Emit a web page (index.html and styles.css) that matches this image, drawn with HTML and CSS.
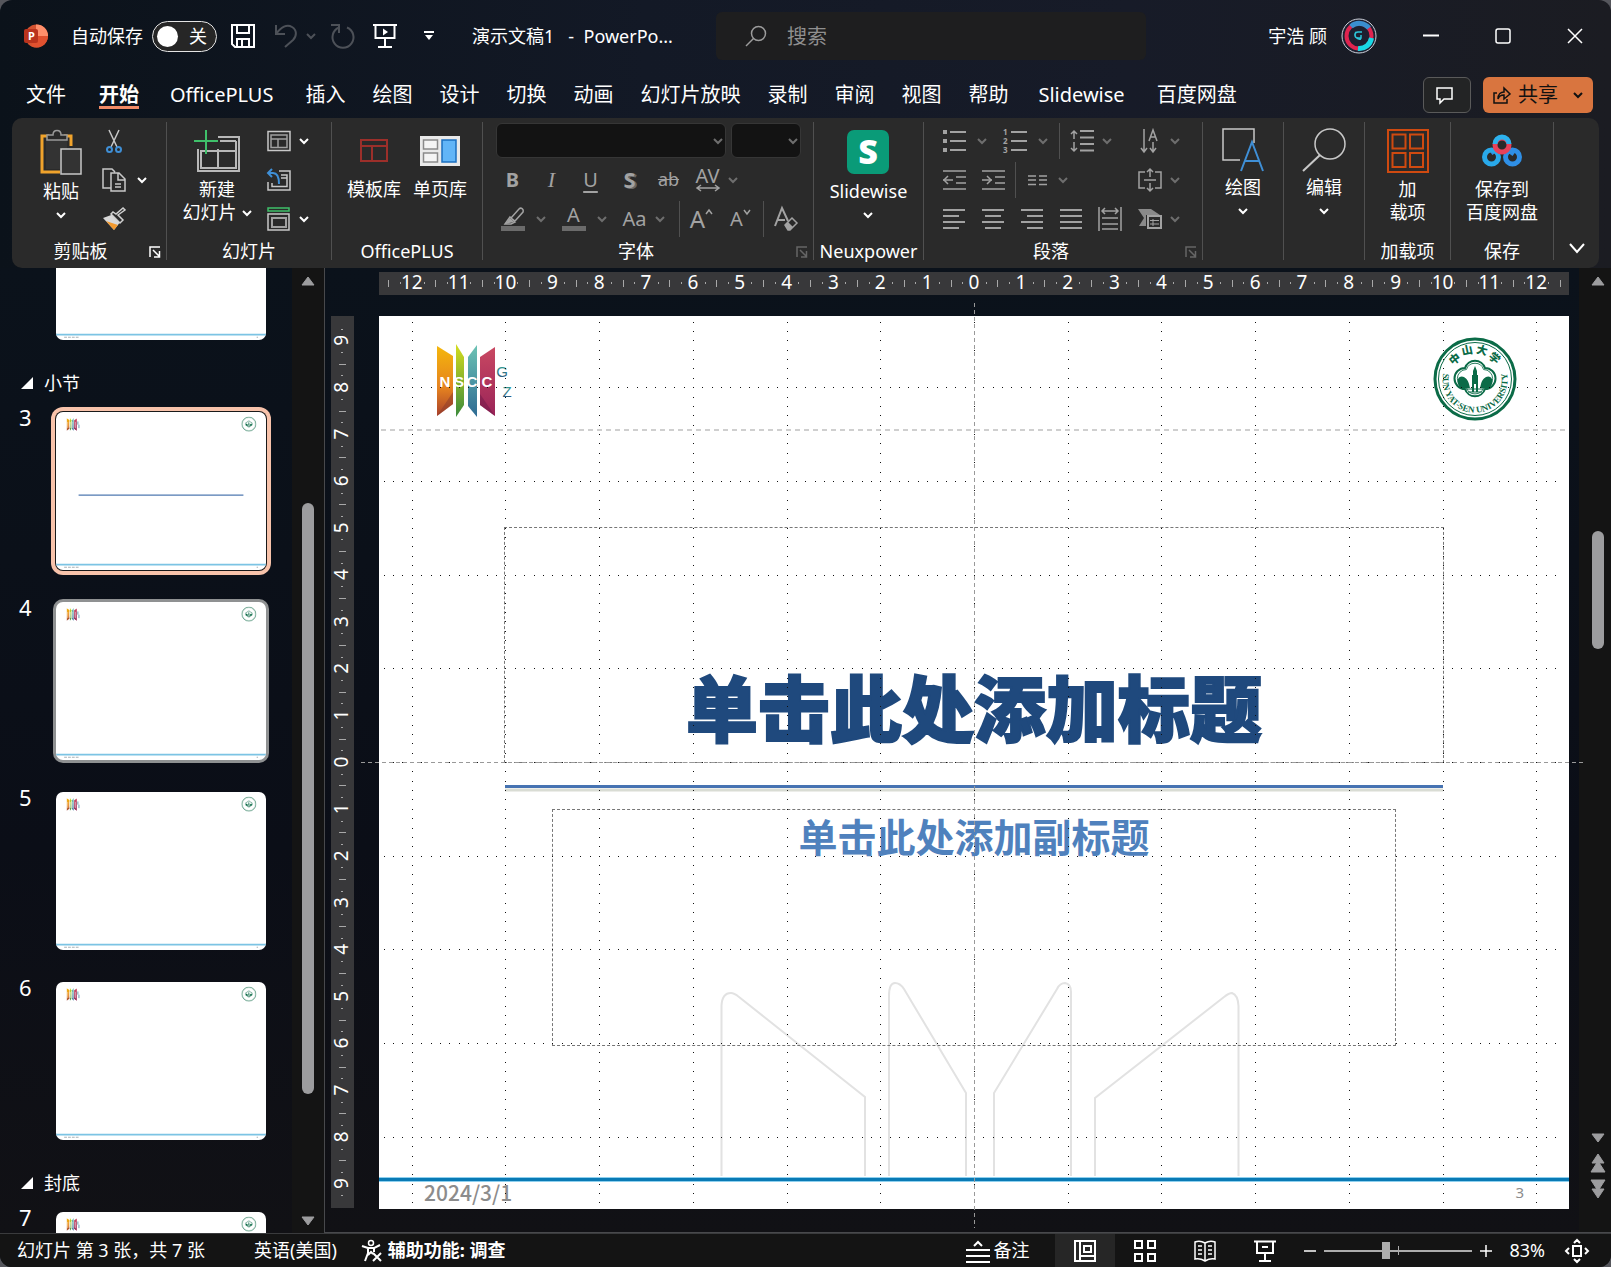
FILE: index.html
```html
<!DOCTYPE html>
<html lang="zh-CN">
<head>
<meta charset="utf-8">
<meta name="viewport" content="width=device-width, initial-scale=1">
<title>演示文稿1 - PowerPoint</title>
<link rel="stylesheet" href="styles.css">
</head>
<body>
<svg class="sprite" width="0" height="0" aria-hidden="true">
  <defs>
    <linearGradient id="gN" x1="0" y1="0" x2="0" y2="1"><stop offset="0" stop-color="#f5b70c"/><stop offset=".6" stop-color="#e5821f"/><stop offset="1" stop-color="#a8402c"/></linearGradient>
    <linearGradient id="gS" x1="0" y1="0" x2="0" y2="1"><stop offset="0" stop-color="#d6dd1e"/><stop offset="1" stop-color="#3a8a3c"/></linearGradient>
    <linearGradient id="gC" x1="0" y1="0" x2="0" y2="1"><stop offset="0" stop-color="#6cc3b4"/><stop offset="1" stop-color="#2d6a93"/></linearGradient>
    <linearGradient id="gD" x1="0" y1="0" x2="0" y2="1"><stop offset="0" stop-color="#c94862"/><stop offset="1" stop-color="#9a2458"/></linearGradient>
    <linearGradient id="gZ" x1="0" y1="0" x2="0" y2="1"><stop offset="0" stop-color="#35b09b"/><stop offset="1" stop-color="#2c4a78"/></linearGradient>
  </defs>
  <symbol id="chev" viewBox="0 0 10 10"><path d="M1 3l4 4 4-4" fill="none" stroke="currentColor" stroke-width="2"/></symbol>
  <symbol id="launch" viewBox="0 0 12 12"><path d="M1 11V1h10M4 4l6 6M10.500 5v6H5" fill="none" stroke="currentColor" stroke-width="1.500"/></symbol>
  <symbol id="bars" viewBox="0 0 71 74">
    <path d="M0 2L16 12V60L0 72z" fill="url(#gN)"/><path d="M19 0L27 13V61L19 73z" fill="url(#gS)"/>
    <path d="M40 1L31 13V62L40 73z" fill="url(#gC)"/><path d="M58 3L43 13V61L58 72z" fill="url(#gD)"/>
    <path d="M0 72l16-24v12z" fill="#8a3a2a" opacity=".5"/><path d="M58 72L43 50v11z" fill="#6d1747" opacity=".5"/>
  </symbol>
  <symbol id="ring" viewBox="-43 -43 86 86">
    <g fill="none" stroke="#0b6b47"><circle r="40" stroke-width="3"/><circle r="36.500" stroke-width="1"/>
    <path d="M-10-11A10.500 10.500 0 0 1 10-11A10.500 10.500 0 0 1 10 10A10.500 10.500 0 0 1-10 10A10.500 10.500 0 0 1-10-11z" stroke-width="2"/>
    <path d="M-10-11A10.500 10.500 0 0 1 10-11A10.500 10.500 0 0 1 10 10A10.500 10.500 0 0 1-10 10A10.500 10.500 0 0 1-10-11z" stroke-width="1" transform="scale(.86)"/></g>
    <path d="M-17 0c3-5 9-2 11 5l1 4h-9c-3-2-4-6-3-9zM17 0C14-5 8-2 6 5L5 9h9c3-2 4-6 3-9z" fill="#0b6b47"/>
    <path d="M-3 13V-4h1v-4L0-13l2 5v4h1v17h-2V5h-2v8z" fill="#0b6b47"/><path d="M-9 10H9M-7 13H7" stroke="#0b6b47"/>
  </symbol>
  <symbol id="mini" viewBox="0 0 1190 892">
    <use href="#bars" x="60" y="32" width="71" height="74"/>
    <path d="M64 54v36M75 54v36M82 54v36M95 54v36M110 54v36" stroke="#fff" stroke-width="4" opacity=".7"/>
    <path d="M124 52v18M130 70v20" stroke="#5a8fa8" stroke-width="5"/>
    <use href="#ring" x="1050" y="24" width="86" height="86"/>
    <path d="M0 863H1190" stroke="#7cc4e4" stroke-width="10"/><path d="M46 878h88M1137 878h8" stroke="#a9b3b8" stroke-width="6" stroke-dasharray="16 6"/>
  </symbol>
</svg>

<div class="app">
  <header class="titlebar">
    <div class="quick">
      <svg class="logo" viewBox="0 0 24 24" aria-hidden="true"><circle cx="12.500" cy="12" r="11.500" fill="#d35230"/><path d="M12 .5A11.500 11.500 0 0 1 24 12H12z" fill="#ff8f6b"/><path d="M12 12h12a11.500 11.500 0 0 1-17 10z" fill="#e0512f"/><rect y="5" width="14" height="14" rx="2" fill="#b9331d"/><text x="4" y="16" class="logo-p">P</text></svg>
      <span class="autosave" id="as">自动保存</span>
      <label class="toggle"><input type="checkbox" aria-labelledby="as"><span>关</span></label>
      <button class="qa save" aria-label="保存"><svg viewBox="0 0 24 24"><path d="M1 1h22v22H4l-3-3zM6 1v8h12V1M6 23v-8h12v8M11 16v6" fill="none" stroke="currentColor" stroke-width="2"/></svg></button>
      <button class="qa undo dim" aria-label="撤消"><svg viewBox="0 0 24 24"><path d="M2 1v9h9M2 10C7 3 13 0 18 3s5 9 1 13l-8 7" fill="none" stroke="currentColor" stroke-width="2"/></svg></button>
      <button class="tiny dim" aria-label="撤消列表"><svg viewBox="0 0 10 10"><use href="#chev"/></svg></button>
      <button class="qa redo dim" aria-label="恢复"><svg viewBox="0 0 24 24"><path d="M1 1h8v8M9 3.500A10.500 10.500 0 1 0 17 3.500" fill="none" stroke="currentColor" stroke-width="2"/></svg></button>
      <button class="qa present" aria-label="从头开始"><svg viewBox="0 0 24 24"><path d="M0 1h24M2.500 1v13h19V1M12 14v8M5 23h14" fill="none" stroke="currentColor" stroke-width="2"/><path d="M10 4.500v7l5-3.500z" fill="currentColor"/></svg></button>
      <button class="tiny more" aria-label="自定义"><svg viewBox="0 0 12 12"><path d="M1 2h10" stroke="currentColor" stroke-width="2"/><path d="M2 5h8l-4 5z" fill="currentColor"/></svg></button>
      <span class="doc">演示文稿1&nbsp;&nbsp; -&nbsp; PowerPo...</span>
    </div>
    <label class="search"><svg viewBox="0 0 22 22" aria-hidden="true"><path d="M8.500 13.500L1 21" stroke="currentColor" stroke-width="1.500"/><circle cx="13.500" cy="8.500" r="7" fill="none" stroke="currentColor" stroke-width="1.500"/></svg><input type="text" placeholder="搜索" aria-label="搜索"></label>
    <div class="account">
      <span class="user">宇浩 顾</span>
      <svg class="avatar" viewBox="0 0 36 36" aria-hidden="true"><circle cx="18" cy="18" r="17" fill="#1d2030" stroke="#cfd3dc"/><circle cx="18" cy="18" r="12.500" fill="none" stroke="#e0244f" stroke-width="4"/><path d="M10 8.500A12.500 12.500 0 0 1 28 10" fill="none" stroke="#3a8fd0" stroke-width="5"/><path d="M30.500 20A12.500 12.500 0 0 1 17 30.500" fill="none" stroke="#19d9e6" stroke-width="5"/><path d="M21 14h-4c-4 0-4 6 0 6h3v-3M15 14c-3 4 1 8 5 7" fill="none" stroke="#2cc5d8" stroke-width="1.500"/></svg>
      <button class="win" aria-label="最小化"><svg viewBox="0 0 16 16"><path d="M0 7.500h16" stroke="currentColor" stroke-width="2"/></svg></button>
      <button class="win" aria-label="最大化"><svg viewBox="0 0 16 16"><rect x="1" y="1" width="14" height="14" rx="2" fill="none" stroke="currentColor" stroke-width="1.500"/></svg></button>
      <button class="win" aria-label="关闭"><svg viewBox="0 0 16 16"><path d="M1 1l14 14M15 1L1 15" stroke="currentColor" stroke-width="1.500"/></svg></button>
    </div>
  </header>

  <nav class="tabs">
    <a href="#">文件</a><a href="#" class="on">开始</a><a href="#" class="latin">OfficePLUS</a><a href="#">插入</a><a href="#">绘图</a><a href="#">设计</a><a href="#">切换</a><a href="#">动画</a><a href="#">幻灯片放映</a><a href="#">录制</a><a href="#">审阅</a><a href="#">视图</a><a href="#">帮助</a><a href="#" class="latin brand">Slidewise</a><a href="#">百度网盘</a>
    <button class="comment" aria-label="批注"><svg viewBox="0 0 18 18"><path d="M1 2h15v11H8l-4 4v-4H1z" fill="none" stroke="currentColor" stroke-width="1.500"/></svg></button>
    <button class="share"><svg class="i18" viewBox="0 0 18 18" aria-hidden="true"><path d="M4 7H1v10h13v-4M5 13c0-5 3-7 6-7V2l6 6-6 5V9c-3 0-5 1-6 4z" fill="none" stroke="currentColor" stroke-width="1.500"/></svg>共享<svg class="chev" viewBox="0 0 10 10" aria-hidden="true"><use href="#chev"/></svg></button>
  </nav>

  <section class="ribbon" aria-label="开始">
    <div class="group clip">
      <div class="body">
        <button class="big low paste"><span class="pic"><svg width="42" height="46" viewBox="0 0 42 46"><path d="M9 7H2v36h18M24 7h7v10" fill="none" stroke="#f0a32c" stroke-width="3"/><path d="M6 10h21v10H20v20H6z" fill="#333"/><path d="M7 11V6h6c0-6 8-6 8 0h6v5z" fill="#2a2a2a" stroke="#9a9a9a" stroke-width="1.500"/><rect x="21" y="20" width="20" height="25" fill="#333" stroke="#c8c8c8" stroke-width="1.500"/></svg></span>粘贴<svg class="chev" viewBox="0 0 10 10"><use href="#chev"/></svg></button>
        <div class="rows">
          <div class="row"><button class="sm" aria-label="剪切"><svg viewBox="0 0 24 24"><path d="M7 1l8 17M17 1L9 18" stroke="#c8c8c8" stroke-width="1.500"/><circle cx="7.500" cy="20.500" r="2.500" fill="none" stroke="#3f8fd6" stroke-width="2"/><circle cx="16.500" cy="20.500" r="2.500" fill="none" stroke="#3f8fd6" stroke-width="2"/></svg></button></div>
          <div class="row"><button class="sm" aria-label="复制"><svg viewBox="0 0 24 24"><path d="M9 20H1V1h9l3 3M9 5h8l6 6v12H9zM16 5v7h7M13 16h6M13 19h6" fill="none" stroke="#c8c8c8" stroke-width="1.500"/></svg></button><button class="dd" aria-label="复制选项"><svg class="chev" viewBox="0 0 10 10"><use href="#chev"/></svg></button></div>
          <div class="row"><button class="sm" aria-label="格式刷"><svg viewBox="0 0 24 24"><path d="M1 11l11 12 7-9-7-7z" fill="#d8d8d8"/><path d="M4 14l8 9 4-5z" fill="#f2992e"/><path d="M9 7l9 9 3-3-5-5 7-5-2-2-7 6-3-2z" fill="#2b2b2b" stroke="#d0d0d0" stroke-width="1.500"/></svg></button></div>
        </div>
      </div>
      <div class="cap launch">剪贴板<button aria-label="剪贴板选项"><svg viewBox="0 0 12 12"><use href="#launch"/></svg></button></div>
    </div>
    <div class="group slides">
      <div class="body">
        <button class="big new"><span class="pic"><svg width="46" height="44" viewBox="0 0 46 44"><path d="M24 8h21v34H4V20M42 12v27H7V22h35M26 12h16M24 20v18" fill="none" stroke="#b8b8b8" stroke-width="2"/><path d="M12 1v24M0 12h24" stroke="#3fc06a" stroke-width="2"/></svg></span>新建<span class="line">幻灯片<svg class="chev" viewBox="0 0 10 10"><use href="#chev"/></svg></span></button>
        <div class="rows">
          <div class="row"><button class="sm" aria-label="版式"><svg viewBox="0 0 24 24"><path d="M1 2.500h22v19H1z" fill="none" stroke="#c8c8c8" stroke-width="1.500"/><path d="M4 6h16v12.500H4zM4 10h16M11 10v8" fill="none" stroke="#a0a0a0" stroke-width="1.500"/></svg></button><button class="dd near" aria-label="版式列表"><svg class="chev" viewBox="0 0 10 10"><use href="#chev"/></svg></button></div>
          <div class="row"><button class="sm" aria-label="重置"><svg viewBox="0 0 24 24"><path d="M12 3h11v19H1V14M14 7h6v11.500H5V15M14 10h6" fill="none" stroke="#c8c8c8" stroke-width="1.500"/><path d="M5 1L1 5l4 4M1 5h5q6 0 6 11" fill="none" stroke="#3f8fd6" stroke-width="2"/></svg></button></div>
          <div class="row"><button class="sm" aria-label="节"><svg viewBox="0 0 24 24"><path d="M1 1h21v3H1z" fill="none" stroke="#3fc06a" stroke-width="1.500"/><path d="M1 7h21v16H1z" fill="none" stroke="#c8c8c8" stroke-width="1.500"/><path d="M5 11h14v9H5z" fill="none" stroke="#a0a0a0" stroke-width="2"/></svg></button><button class="dd near" aria-label="节列表"><svg class="chev" viewBox="0 0 10 10"><use href="#chev"/></svg></button></div>
        </div>
      </div>
      <div class="cap">幻灯片</div>
    </div>
    <div class="group plus">
      <div class="body center">
        <button class="big"><span class="pic"><svg width="28" height="24" viewBox="0 0 28 24"><path d="M1 1h26v21H1zM1 7h26M12 7v15" fill="none" stroke="#9c2f2a" stroke-width="2"/></svg></span>模板库</button>
        <button class="big"><span class="pic"><svg width="40" height="30" viewBox="0 0 40 30"><path d="M0 0h40v30H0z" fill="#e9e9e9"/><path d="M3.500 4h14v9h-14zM3.500 17h14v9h-14z" fill="#f4f4f4" stroke="#8a8a8a" stroke-width="1.500"/><path d="M22 4h14v22H22z" fill="#62b5f7" stroke="#1b6fc0" stroke-width="1.500"/></svg></span>单页库</button>
      </div>
      <div class="cap">OfficePLUS</div>
    </div>
    <div class="group font">
      <div class="body">
        <div class="rows off">
          <div class="row combos"><span class="combo name"><select aria-label="字体"><option></option></select><svg class="chev" viewBox="0 0 10 10"><use href="#chev"/></svg></span><span class="combo size"><select aria-label="字号"><option></option></select><svg class="chev" viewBox="0 0 10 10"><use href="#chev"/></svg></span></div>
          <div class="row"><button class="sm b">B</button><button class="sm i">I</button><button class="sm u">U</button><button class="sm s">S</button><button class="sm st">ab</button><button class="sm av"><span>AV</span><svg class="arrow" viewBox="0 0 24 8"><path d="M1 4h22M5 1L1 4l4 3M19 1l4 3-4 3" fill="none" stroke="currentColor" stroke-width="1.500"/></svg></button><button class="dd near" aria-label="字符间距"><svg class="chev" viewBox="0 0 10 10"><use href="#chev"/></svg></button></div>
          <div class="row"><button class="sm" aria-label="突出显示"><svg viewBox="0 0 24 24"><path d="M0 19h24v5H0z" fill="#6b6b6b"/><path d="M10 11l8-9c2-2 5 0 4 3l-8 9zM9 10l5 5-4 2H4z" fill="none" stroke="currentColor" stroke-width="1.500"/><path d="M9 11l4 4-9 2z" fill="currentColor"/></svg></button><button class="dd" aria-label="突出显示颜色"><svg class="chev" viewBox="0 0 10 10"><use href="#chev"/></svg></button><button class="sm fc">A</button><button class="dd" aria-label="字体颜色"><svg class="chev" viewBox="0 0 10 10"><use href="#chev"/></svg></button><button class="sm aa">Aa</button><button class="dd near wide" aria-label="更改大小写"><svg class="chev" viewBox="0 0 10 10"><use href="#chev"/></svg></button><i class="sep"></i><button class="sm grow">A<svg class="mark" viewBox="0 0 8 6"><path d="M1 5l3-4 3 4" fill="none" stroke="currentColor" stroke-width="1.500"/></svg></button><button class="sm shrink">A<svg class="mark" viewBox="0 0 8 6"><path d="M1 1l3 4 3-4" fill="none" stroke="currentColor" stroke-width="1.500"/></svg></button><i class="sep"></i><button class="sm" aria-label="清除格式"><svg viewBox="0 0 24 24"><path d="M1 19L8 1l6 13M3 13h8" fill="none" stroke="currentColor" stroke-width="2"/><path d="M11 18l7-7 5 5-7 7h-2z" fill="none" stroke="currentColor" stroke-width="1.500"/><path d="M11 18l3-3 5 5-3 3h-2z" fill="currentColor"/></svg></button></div>
        </div>
      </div>
      <div class="cap launch off2">字体<button aria-label="字体选项"><svg viewBox="0 0 12 12"><use href="#launch"/></svg></button></div>
    </div>
    <div class="group neux">
      <div class="body center"><button class="big low"><span class="pic"><svg width="42" height="44" viewBox="0 0 42 44"><rect width="42" height="44" rx="7" fill="#0a9b78"/><text x="21" y="34" text-anchor="middle" class="s-logo">S</text></svg></span>Slidewise<svg class="chev" viewBox="0 0 10 10"><use href="#chev"/></svg></button></div>
      <div class="cap">Neuxpower</div>
    </div>
    <div class="group para">
      <div class="body">
        <div class="rows off">
          <div class="row"><button class="sm" aria-label="项目符号"><svg viewBox="0 0 24 24"><path d="M8 3h16M8 12h16M8 21h16" stroke="currentColor" stroke-width="2"/><path d="M1 1h4v4H1zM1 10h4v4H1zM1 19h4v4H1z" fill="currentColor"/></svg></button><button class="dd" aria-label="项目符号库"><svg class="chev" viewBox="0 0 10 10"><use href="#chev"/></svg></button><button class="sm" aria-label="编号"><svg viewBox="0 0 24 24"><path d="M8 3h16M8 12h16M8 21h16" stroke="currentColor" stroke-width="2"/><text x="0" y="6" class="num">1</text><text x="0" y="15" class="num">2</text><text x="0" y="24" class="num">3</text></svg></button><button class="dd" aria-label="编号库"><svg class="chev" viewBox="0 0 10 10"><use href="#chev"/></svg></button><i class="sep"></i><button class="sm" aria-label="行距"><svg viewBox="0 0 24 24"><path d="M10 2h14M10 8.500h14M10 15h14M10 21.500h14" stroke="currentColor" stroke-width="2"/><path d="M4 2v8M1 5l3-3 3 3M4 13v9M1 19l3 3 3-3" fill="none" stroke="currentColor" stroke-width="1.500"/></svg></button><button class="dd near" aria-label="行距选项"><svg class="chev" viewBox="0 0 10 10"><use href="#chev"/></svg></button><button class="sm end" aria-label="文字方向"><svg viewBox="0 0 24 24"><path d="M6 0v23M3 19l3 4 3-4M15 13v10M12 19l3 4 3-4M11 12l4-11 4 11M12 8h6" fill="none" stroke="currentColor" stroke-width="1.500"/></svg></button><button class="dd near last" aria-label="文字方向选项"><svg class="chev" viewBox="0 0 10 10"><use href="#chev"/></svg></button></div>
          <div class="row"><button class="sm" aria-label="减少缩进"><svg viewBox="0 0 24 24"><path d="M1 3h23M14 9h10M14 15h10M1 21h23M1 12h10" stroke="currentColor" stroke-width="1.500"/><path d="M6 8l-4 4 4 4" fill="none" stroke="currentColor" stroke-width="1.500"/></svg></button><button class="sm" aria-label="增加缩进"><svg viewBox="0 0 24 24"><path d="M1 3h23M14 9h10M14 15h10M1 21h23M1 12h10" stroke="currentColor" stroke-width="1.500"/><path d="M6 8l4 4-4 4" fill="none" stroke="currentColor" stroke-width="1.500"/></svg></button><i class="sep"></i><button class="sm" aria-label="分栏"><svg viewBox="0 0 24 24"><path d="M2 8h8M13 8h8M2 12h8M13 12h8M2 16.500h8M13 16.500h8" stroke="currentColor" stroke-width="1.500"/></svg></button><button class="dd near" aria-label="分栏选项"><svg class="chev" viewBox="0 0 10 10"><use href="#chev"/></svg></button><button class="sm end" aria-label="对齐文本"><svg viewBox="0 0 24 24"><path d="M7 4H1v16h6M17 4h6v16h-6M6 12h12M12 1v8M9 4l3-3 3 3M12 15v8M9 20l3 3 3-3" fill="none" stroke="currentColor" stroke-width="1.500"/></svg></button><button class="dd near last" aria-label="对齐文本选项"><svg class="chev" viewBox="0 0 10 10"><use href="#chev"/></svg></button></div>
          <div class="row"><button class="sm" aria-label="左对齐"><svg viewBox="0 0 24 24"><path d="M1 3h22M1 9h16M1 15h22M1 21h16" stroke="currentColor" stroke-width="2"/></svg></button><button class="sm" aria-label="居中"><svg viewBox="0 0 24 24"><path d="M1 3h22M4 9h16M1 15h22M4 21h16" stroke="currentColor" stroke-width="2"/></svg></button><button class="sm" aria-label="右对齐"><svg viewBox="0 0 24 24"><path d="M1 3h22M7 9h16M1 15h22M7 21h16" stroke="currentColor" stroke-width="2"/></svg></button><button class="sm" aria-label="两端对齐"><svg viewBox="0 0 24 24"><path d="M1 3h22M1 9h22M1 15h22M1 21h22" stroke="currentColor" stroke-width="2"/></svg></button><button class="sm" aria-label="分散对齐"><svg viewBox="0 0 24 24"><path d="M1 0v24M23 0v24M4 11h16M4 17h16M4 22h16M4 4h16M7 1L4 4l3 3M17 1l3 3-3 3" fill="none" stroke="currentColor" stroke-width="1.500"/></svg></button><button class="sm end" aria-label="SmartArt"><svg viewBox="0 0 24 24"><path d="M0 2h13l9 6H8v11H1l5-8z" fill="#8a8a8a"/><rect x="10" y="9" width="13" height="12" fill="#2b2b2b" stroke="currentColor" stroke-width="2"/><path d="M12 13.500h9M12 17h9M15 12v7" stroke="currentColor"/></svg></button><button class="dd near last" aria-label="SmartArt选项"><svg class="chev" viewBox="0 0 10 10"><use href="#chev"/></svg></button></div>
        </div>
      </div>
      <div class="cap launch off2">段落<button aria-label="段落选项"><svg viewBox="0 0 12 12"><use href="#launch"/></svg></button></div>
    </div>
    <div class="group draw"><div class="body center"><button class="big high"><span class="pic"><svg width="42" height="44" viewBox="0 0 42 44"><path d="M18 32H1V1h31v14" fill="none" stroke="#c8c8c8" stroke-width="1.500"/><path d="M19 43L30 14l11 29M23 33h14" fill="none" stroke="#3f8fd6" stroke-width="2"/></svg></span>绘图<svg class="chev" viewBox="0 0 10 10"><use href="#chev"/></svg></button></div></div>
    <div class="group edit"><div class="body center"><button class="big high"><span class="pic"><svg width="44" height="44" viewBox="0 0 44 44"><circle cx="28" cy="16" r="15" fill="none" stroke="#c8c8c8" stroke-width="1.500"/><path d="M18 27L1 43" stroke="#c8c8c8" stroke-width="2"/></svg></span>编辑<svg class="chev" viewBox="0 0 10 10"><use href="#chev"/></svg></button></div></div>
    <div class="group addin"><div class="body center"><button class="big"><span class="pic"><svg width="42" height="44" viewBox="0 0 42 44"><path d="M1 1h40v42H1zM5.500 5.500h13v14h-13zM23 5.500h13v14H23zM5.500 24h13v14h-13zM23 24h13v14H23z" fill="none" stroke="#cf4a10" stroke-width="2"/></svg></span>加<span class="line">载项</span></button></div><div class="cap">加载项</div></div>
    <div class="group disk"><div class="body center"><button class="big"><span class="pic"><svg width="40" height="32" viewBox="0 0 40 32"><path d="M15 14L9 18M25 14l7 5" stroke="#2f8fe6" stroke-width="5"/><circle cx="9.500" cy="22" r="7" fill="none" stroke="#29a9ea" stroke-width="5"/><circle cx="30.500" cy="22" r="7" fill="none" stroke="#2f8fe6" stroke-width="5"/><circle cx="20" cy="10" r="7" fill="none" stroke="#e8415a" stroke-width="5"/><path d="M13 9a7 7 0 0 1 14 0" fill="none" stroke="#2db2ee" stroke-width="5"/></svg></span>保存到<span class="line">百度网盘</span></button></div><div class="cap">保存</div></div>
    <button class="collapse" aria-label="折叠功能区"><svg viewBox="0 0 16 16"><path d="M1 4l7 8 7-8" fill="none" stroke="currentColor" stroke-width="2"/></svg></button>
  </section>

  <main class="work">
    <aside class="panel">
      <ol class="thumbs">
        <li class="first"><span class="n"></span><button class="thumb" aria-label="幻灯片 2"><svg viewBox="0 0 1190 892"><use href="#mini"/></svg></button></li>
        <li class="section"><svg viewBox="0 0 12 12"><path d="M12 0v12H0z" fill="currentColor"/></svg>小节</li>
        <li><span class="n">3</span><button class="thumb sel" aria-label="幻灯片 3"><svg viewBox="0 0 1190 892"><use href="#mini"/><path d="M128 470H1062" stroke="#4f78b0" stroke-width="7"/></svg></button></li>
        <li><span class="n">4</span><button class="thumb hov" aria-label="幻灯片 4"><svg viewBox="0 0 1190 892"><use href="#mini"/></svg></button></li>
        <li><span class="n">5</span><button class="thumb" aria-label="幻灯片 5"><svg viewBox="0 0 1190 892"><use href="#mini"/></svg></button></li>
        <li><span class="n">6</span><button class="thumb" aria-label="幻灯片 6"><svg viewBox="0 0 1190 892"><use href="#mini"/></svg></button></li>
        <li class="section"><svg viewBox="0 0 12 12"><path d="M12 0v12H0z" fill="currentColor"/></svg>封底</li>
        <li><span class="n">7</span><button class="thumb" aria-label="幻灯片 7"><svg viewBox="0 0 1190 892"><use href="#mini"/></svg></button></li>
      </ol>
      <div class="scroll left"><svg viewBox="0 0 14 10"><path d="M7 1l6 8H1z" fill="currentColor" stroke="currentColor" stroke-linejoin="round"/></svg><i class="before"></i><i class="bar"></i><i class="after"></i><svg viewBox="0 0 14 10"><path d="M7 9L1 1h12z" fill="currentColor" stroke="currentColor" stroke-linejoin="round"/></svg></div>
    </aside>

    <div class="editor">
      <svg class="hruler" id="hruler" viewBox="0 0 1190 23" aria-hidden="true"></svg>
      <svg class="vruler" id="vruler" viewBox="0 0 23 892" aria-hidden="true"></svg>
      <article class="slide">
        <svg class="art" viewBox="0 0 1190 893" aria-hidden="true">
          <path d="M342.500 860V690Q343 677 352 677Q355 677 360 681L486 781V860M510 860V680Q510 667 516 667Q521 667 525 673L587 777V860M615 860V777L678 673Q681 667 686 667Q692 668 692 676V860M716 860V782L845 681Q850 677 853 677Q859 679 859.500 690V860" fill="none" stroke="#e2e2e2" stroke-width="2"/>
          <path d="M0 863.500H1190" stroke="#8fd0ee" stroke-width="5"/><path d="M0 863.500H1190" stroke="#0a7ab5" stroke-width="3"/>
          <use href="#bars" x="58" y="28" width="71" height="74"/>
          <g class="nscc"><text x="66" y="71">N</text><text x="80" y="71">S</text><text x="93" y="71">C</text><text x="108" y="71">C</text><text x="123" y="61" class="gz">G</text><text x="128" y="81" class="gz">Z</text></g>
          <use href="#ring" x="1053" y="20" width="86" height="86"/>
          <g class="seal"><text transform="translate(1078 46) rotate(-38)">中</text><text transform="translate(1089 38) rotate(-12)">山</text><text transform="translate(1102 38) rotate(14)">大</text><text transform="translate(1113 45) rotate(40)">学</text></g>
          <path id="arc" d="M1065.500 53A32.500 32.500 0 1 0 1126.500 53" fill="none"/>
          <text class="ring-text"><textPath href="#arc" startOffset="50%" text-anchor="middle">SUN YAT-SEN UNIVERSITY</textPath></text>
          <path d="M126 474H1064" stroke="#d9dcd4" stroke-width="3"/><path d="M126 470.500H1064" stroke="#4673b2" stroke-width="3"/>
        </svg>
        <h1 class="holder title">单击此处添加标题</h1>
        <p class="holder sub">单击此处添加副标题</p>
        <span class="date">2024/3/1</span><span class="page">3</span>
        <svg class="guides" id="guides" viewBox="0 0 1190 893" aria-hidden="true"></svg>
      </article>
      <div class="scroll right"><svg viewBox="0 0 14 10"><path d="M7 1l6 8H1z" fill="currentColor" stroke="currentColor" stroke-linejoin="round"/></svg><i class="before"></i><i class="bar"></i><i class="after"></i><svg viewBox="0 0 14 10"><path d="M7 9L1 1h12z" fill="currentColor" stroke="currentColor" stroke-linejoin="round"/></svg><svg class="dbl" viewBox="0 0 16 20"><path d="M8 1l6 9H2zM8 8l7 11H1z" fill="currentColor" stroke="currentColor" stroke-linejoin="round"/></svg><svg class="dbl" viewBox="0 0 16 20"><path d="M8 19l6-9H2zM8 12L15 1H1z" fill="currentColor" stroke="currentColor" stroke-linejoin="round"/></svg></div>
    </div>
  </main>

  <footer class="status">
    <span>幻灯片 第 3 张，共 7 张</span>
    <span class="lang">英语(美国)</span>
    <button class="acc"><svg viewBox="0 0 24 24" aria-hidden="true"><path d="M2 7l6 2v5l-3 8M20 6l-6 3v4M8 9h6M8 16l3-3 2 2" fill="none" stroke="currentColor" stroke-width="2"/><circle cx="11" cy="4" r="2.500" fill="none" stroke="currentColor" stroke-width="1.500"/><path d="M13 14l8 8M21 14l-8 8" stroke="currentColor" stroke-width="2"/></svg>辅助功能: 调查</button>
    <button class="notes"><svg viewBox="0 0 24 24" aria-hidden="true"><path d="M8 7l4-4 4 4M0 11h24M0 17h24M0 23h24" fill="none" stroke="currentColor" stroke-width="2"/></svg>备注</button>
    <div class="views">
      <button class="on" aria-label="普通"><svg viewBox="0 0 22 22"><path d="M1 1h20v20H1zM6 1v20M10 6h7v6h-7zM6 16h15" fill="none" stroke="currentColor" stroke-width="2"/></svg></button>
      <button aria-label="幻灯片浏览"><svg viewBox="0 0 22 22"><path d="M1 1h7v7H1zM14 1h7v7h-7zM1 14h7v7H1zM14 14h7v7h-7z" fill="none" stroke="currentColor" stroke-width="2"/></svg></button>
      <button aria-label="阅读视图"><svg viewBox="0 0 22 22"><path d="M11 3Q6 0 1 2v17q5-1 10 2 5-3 10-2V2q-5-2-10 1zv18M4 6h4M4 10h4M4 14h4M14 6h4M14 10h4M14 14h4" fill="none" stroke="currentColor" stroke-width="1.500"/></svg></button>
      <button aria-label="放映"><svg viewBox="0 0 22 22"><path d="M0 1.500h22M3 2v11h16V2M8 7h6M11 13v8M5 21h12" fill="none" stroke="currentColor" stroke-width="2"/></svg></button>
    </div>
    <button class="zoom" aria-label="缩小"><svg viewBox="0 0 12 12"><path d="M0 6h12" stroke="currentColor" stroke-width="1.500"/></svg></button>
    <input class="range" type="range" min="0" max="100" value="41" aria-label="缩放">
    <button class="zoom" aria-label="放大"><svg viewBox="0 0 12 12"><path d="M0 6h12M6 0v12" stroke="currentColor" stroke-width="1.500"/></svg></button>
    <span class="pct">83%</span>
    <button class="fit" aria-label="适应窗口"><svg viewBox="0 0 24 24"><path d="M8 7h8v10H8zM9 4l3-3 3 3M9 20l3 3 3-3M4 9l-3 3 3 3M20 9l3 3-3 3" fill="none" stroke="currentColor" stroke-width="2"/></svg></button>
  </footer>
</div>
<script src="script.js"></script>
</body>
</html>
```
FILE: styles.css
```css
* { box-sizing: border-box; }
html { background: #55565c; }
body {
  margin: 0;
  color: #fff;
  font: 18px/23px "Noto Sans", "Noto Sans CJK SC", sans-serif;
}
button, input, select { font: inherit; color: inherit; }
button {
  display: flex;
  align-items: center;
  justify-content: center;
  padding: 0;
  border: 0;
  background: none;
}
svg { display: block; flex: none; overflow: visible; }
a { color: inherit; text-decoration: none; }
.sprite { position: absolute; }
.chev { width: 10px; height: 10px; }

.app {
  display: flex;
  flex-direction: column;
  height: 100vh;
  overflow: hidden;
  border-radius: 12px;
  background: linear-gradient(90deg, #0b121a, #131926 40%, #171b28 70%, #1b1c22);
}

/* title bar */
.titlebar {
  display: grid;
  grid-template-columns: minmax(0, 716fr) minmax(0, 430fr) minmax(0, 465fr);
  align-items: center;
  height: 72px;
  flex: none;
}
.quick { display: flex; align-items: center; padding-left: 24px; white-space: nowrap; }
.logo { width: 24px; height: 24px; margin-right: 23px; }
.logo-p { font: bold 11px "Noto Sans", sans-serif; fill: #fff; }
.toggle {
  display: flex;
  align-items: center;
  gap: 11px;
  width: 65px;
  height: 31px;
  margin: 0 14px 0 9px;
  padding-left: 4px;
  border: 1px solid #e4e4e4;
  border-radius: 16px;
  background: #262626;
}
.toggle input {
  width: 21px;
  height: 21px;
  margin: 0;
  border-radius: 50%;
  background: #fff;
  appearance: none;
}
.qa, .qa svg { width: 24px; height: 24px; }
.dim { color: #4d5158; }
.undo { margin-left: 19px; }
.tiny { margin-left: 8px; }
.tiny svg { width: 10px; height: 10px; }
.redo { margin-left: 14px; }
.present { margin-left: 19px; }
.more { margin-left: 26px; }
.more svg { width: 12px; height: 12px; }
.doc { margin-left: 37px; white-space: pre; }
.search {
  display: flex;
  align-items: center;
  gap: 18px;
  height: 48px;
  padding-left: 29px;
  border-radius: 6px;
  background: #1e1e1f;
  color: #9c9c9c;
}
.search svg { width: 22px; height: 22px; }
.search input {
  flex: 1;
  min-width: 0;
  padding: 0 2px;
  border: 0;
  outline: 0;
  background: none;
  font-size: 20px;
}
.search input::placeholder { color: #8f8f8f; opacity: 1; }
.account { display: flex; align-items: center; justify-content: flex-end; }
.avatar { width: 36px; height: 36px; margin: 0 18px 0 14px; }
.win { width: 72px; height: 72px; }
.win svg { width: 16px; height: 16px; }

/* tabs */
.tabs {
  display: flex;
  align-items: center;
  height: 46px;
  flex: none;
  padding: 0 18px 0 12px;
  font-size: 20px;
  line-height: 28px;
  white-space: nowrap;
}
.tabs a { padding: 0 13px 0 14px; }
.tabs a.on { font-weight: 700; margin: 0 3px 0 6px; padding: 0 14px; background: linear-gradient(#f28b66, #f28b66) center bottom / 40px 3px no-repeat; }
.tabs .latin { margin-right: 5px; }
.tabs .brand { margin-left: 3px; }
.comment {
  width: 48px;
  height: 36px;
  margin-left: auto;
  padding-right: 4px;
  border: 1px solid #5a5a5a;
  border-radius: 6px;
  background: #232425;
}
.comment svg, .i18 { width: 18px; height: 18px; }
.share {
  gap: 7px;
  width: 110px;
  height: 36px;
  margin-left: 12px;
  border-radius: 6px;
  background: #d9753f;
  color: #111;
}
.share .chev { margin-left: 8px; }

/* ribbon */
.ribbon {
  display: flex;
  flex: none;
  margin: 0 12px;
  padding: 4px 0 8px;
  border-radius: 10px;
  background: #2a2a2a;
  white-space: nowrap;
}
.group { flex: none; border-right: 1px solid #505050; }
.clip { width: 155px; }
.slides { width: 165px; }
.plus { width: 151px; }
.font { width: 331px; }
.neux { width: 110px; }
.para { width: 279px; }
.draw, .edit { width: 81px; }
.addin { width: 86px; }
.disk { width: 103px; }
.body { display: flex; height: 117px; }
.center { justify-content: center; }
.clip .body { padding-left: 16px; }
.slides .body { padding-left: 4px; }
.font .body, .para .body { padding-left: 10px; }
.cap {
  height: 21px;
  line-height: 24px;
  text-align: center;
}
.launch {
  display: grid;
  grid-template-columns: 1fr 12px;
  padding-right: 5px;
}
.launch button { height: 26px; }
.launch svg { width: 12px; height: 12px; }
.off2 { column-gap: 7px; }
.off2 button { color: #666; }
.big {
  flex-direction: column;
  justify-content: flex-start;
  min-width: 66px;
  padding-top: 2px;
}
.new { width: 92px; margin-right: -4px; }
.pic {
  display: flex;
  align-items: center;
  justify-content: center;
  height: 54px;
}
.low .pic { height: 56px; }
.high .pic { height: 52px; }
.big > .chev { margin-top: 7px; }
.line { display: flex; align-items: center; gap: 5px; }
.s-logo { font: 900 34px "Noto Sans", sans-serif; fill: #fff; }
.rows { display: flex; flex-direction: column; flex: 1; margin-top: -1px; }
.row { display: flex; align-items: center; height: 39px; }
.off { color: #a2a2a2; }
.off .dd, .combo { color: #6e6e6e; }
.sm { width: 39px; height: 39px; }
.sm > svg { width: 24px; height: 24px; }
.dd { width: 22px; height: 39px; justify-content: flex-start; padding-left: 4px; }
.dd.near { width: 16px; padding-left: 1px; }
.dd.wide { width: 22px; }
.end { margin-left: auto; }
.last { margin-right: 17px; }
.sep { width: 1px; height: 36px; margin: 0 2px 0 3px; background: #505050; }
.combos { gap: 5px; padding-left: 3px; }
.combo { display: flex; align-items: center; position: relative; }
.combo select {
  width: 100%;
  height: 35px;
  border: 1px solid #363636;
  border-radius: 6px;
  background: #131313;
  appearance: none;
}
.combo .chev { position: absolute; right: 3px; }
.name { width: 230px; }
.size { width: 70px; }
.b { font-weight: 700; font-size: 20px; }
.i { font: italic 22px "Liberation Serif", serif; }
.u { font-size: 20px; text-decoration: underline; text-underline-offset: 4px; }
.s { font-weight: 700; font-size: 22px; text-shadow: 2px 1px #666; }
.st { font-size: 18px; text-decoration: line-through; }
.av { flex-direction: column; }
.av span { font-size: 20px; line-height: 16px; }
.sm > .arrow { width: 24px; height: 8px; }
.fc, .aa, .shrink { font-size: 20px; }
.fc { padding-bottom: 8px; background: linear-gradient(#6b6b6b, #6b6b6b) center 27px / 24px 5px no-repeat; line-height: 18px; }
.grow { font-size: 24px; }
.sm > .mark { width: 8px; height: 6px; margin-bottom: 14px; }
.num { font: bold 8px "Noto Sans", sans-serif; fill: currentColor; }
.collapse { align-self: flex-end; margin: 0 auto; width: 40px; height: 24px; }
.collapse svg { width: 16px; height: 16px; }

/* slide list */
.work {
  display: flex;
  flex: 1;
  min-height: 0;
  background: linear-gradient(#0b121b, #0b0e17 60%, #111115);
}
.panel {
  display: flex;
  justify-content: space-between;
  width: 325px;
  flex: none;
  overflow: hidden;
  border-right: 1px solid #48494c;
}
.thumbs { margin: 0; padding: 0 0 0 14px; list-style: none; }
.thumbs li { display: flex; gap: 18px; margin-bottom: 32px; }
.thumbs .first { margin-top: -86px; }
.n { width: 24px; padding-left: 5px; font-size: 22px; line-height: 10px; }
.thumbs .section { align-items: center; gap: 11px; height: 22px; margin-bottom: 18px; padding-left: 7px; }
.section svg { width: 12px; height: 12px; }
.thumb {
  width: 210px;
  height: 158px;
  overflow: hidden;
  border-radius: 7px;
  background: #fff;
}
.thumb svg { width: 210px; height: 158px; }
.sel { box-shadow: 0 0 0 1px #1a1a1a, 0 0 0 5px #f8c3ab; }
.hov { box-shadow: 0 0 0 3px #8f9192; }

.scroll {
  display: flex;
  flex-direction: column;
  align-items: center;
  color: #9d9d9f;
  background: #141414;
}
.scroll svg { width: 14px; height: 10px; }
.scroll .dbl { width: 16px; height: 20px; }
.bar { width: 12px; border-radius: 6px; background: #9d9d9f; }
.left { width: 32px; padding: 8px 0 7px; }
.left .before { flex: 217; }
.left .bar { flex: 591; }
.left .after { flex: 122; }
.right {
  grid-area: 1 / 3 / 3 / 4;
  width: 32px;
  margin: -4px 0 0 auto;
  padding: 8px 0 33px 6px;
}
.right .before { flex: 245; }
.right .bar { flex: 118; }
.right .after { flex: 483; }
.right .dbl { margin-top: 6px; }
.right .after + svg { margin-bottom: 4px; }

/* editor */
.editor {
  display: grid;
  grid-template-columns: 23px minmax(0, 1fr) 42px;
  grid-template-rows: auto 1fr;
  flex: 1;
  column-gap: 0;
  row-gap: 21px;
  min-width: 0;
  padding: 4px 0 0 6px;
  overflow: hidden;
  border-bottom: 1px solid #48494c;
}
.hruler { grid-area: 1 / 2; margin-left: 25px; background: #38383a; }
.vruler { grid-area: 2 / 1; width: 23px; background: #38383a; }
.ruler-num { font: 19px "Noto Sans", sans-serif; fill: #fff; text-anchor: middle; }
.slide {
  grid-area: 2 / 2;
  align-self: start;
  position: relative;
  margin-left: 25px;
  aspect-ratio: 1190 / 893;
  background: #fff;
}
.art { width: 100%; }
.guides { position: absolute; inset: 0; width: 100%; pointer-events: none; }
.nscc { font: bold 15px "Liberation Sans", sans-serif; fill: #fff; text-anchor: middle; }
.nscc .gz { font-weight: 400; fill: url(#gZ); }
.seal { font: 900 11px "Noto Sans CJK SC", sans-serif; text-anchor: middle; fill: #0b6b47; }
.ring-text { font: bold 9px "Liberation Serif", serif; fill: #0b6b47; }
.holder {
  position: absolute;
  display: flex;
  justify-content: center;
  margin: 0;
  border: 1px dashed #777;
  font-family: "Noto Sans CJK SC", sans-serif;
}
.title {
  left: 10.5%;
  right: 10.5%;
  top: 23.6%;
  bottom: 49.9%;
  align-items: flex-end;
  padding-bottom: 11px;
  color: #1f497d;
  font-size: 72px;
  line-height: 92px;
  font-weight: 900;
  -webkit-text-stroke: 2px #1f497d;
}
.sub {
  left: 14.5%;
  right: 14.5%;
  top: 55.2%;
  bottom: 18.3%;
  color: #4f81bd;
  font-size: 39px;
  line-height: 50px;
  font-weight: 700;
}
.date, .page { position: absolute; bottom: 5px; color: #8c8c8c; }
.date { left: 45px; font: 500 21px/24px "Noto Sans CJK SC", sans-serif; }
.page { right: 45px; font-size: 15px; }

/* status bar */
.status {
  display: flex;
  align-items: center;
  height: 34px;
  flex: none;
  padding: 0 22px 0 17px;
  border-top: 1px solid #3a3b3d;
  background: #141414;
  white-space: nowrap;
}
.lang { margin-left: 49px; }
.acc { gap: 4px; margin-left: 23px; font-weight: 700; }
.acc svg, .notes svg, .fit svg { width: 24px; height: 24px; }
.notes { gap: 3px; margin-left: auto; }
.views { display: flex; margin: 0 9px 0 26px; }
.views button { width: 60px; height: 33px; }
.views .on { background: #262626; }
.views svg { width: 22px; height: 22px; }
.zoom svg { width: 12px; height: 12px; }
.range {
  width: 148px;
  height: 17px;
  margin: 0 8px;
  background:
    linear-gradient(#adadad, #adadad) center / 1px 9px no-repeat,
    linear-gradient(#adadad, #adadad) center / 100% 2px no-repeat;
  appearance: none;
}
.range::-webkit-slider-thumb { width: 8px; height: 17px; background: #adadad; appearance: none; }
.pct { margin: 0 20px 0 17px; }
```
FILE: script.js
```js
// Rulers and grid of a 25.4 x 19 cm slide, in units of 1190 x 893.
const CM = 1190 / 25.4, CX = 595, CY = 446;
const hr = document.getElementById('hruler');
const vr = document.getElementById('vruler');
const guides = document.getElementById('guides');

function ruler(count, centre, at, extent) {
  let out = '';
  for (let q = -count * 4 - 2; q <= count * 4 + 2; q++) {
    const p = centre + q * CM / 4;
    if (p < 2 || p > extent - 2) continue;
    if (q % 4 === 0) out += at(p, 'num', Math.abs(q / 4));
    else out += at(p, q % 2 === 0 ? 7 : 2);
  }
  return out;
}
hr.innerHTML = ruler(12, CX, (p, kind, n) => kind === 'num'
  ? `<text class="ruler-num" x="${p}" y="17">${n}</text>`
  : `<rect x="${Math.round(p)}" y="${11 - Math.floor(kind / 2)}" width="1" height="${kind}" fill="#a8a8a8"/>`, 1190);
vr.innerHTML = ruler(9, CY, (p, kind, n) => kind === 'num'
  ? `<text class="ruler-num" transform="translate(17 ${p}) rotate(-90)">${n}</text>`
  : `<rect y="${Math.round(p)}" x="${11 - Math.floor(kind / 2)}" height="1" width="${kind}" fill="#a8a8a8"/>`, 892);

let dots = '';
const dot = (x, y) => { dots += `M${Math.round(x)} ${Math.round(y)}h1v1h-1z`; };
for (let c = -6; c <= 6; c++) {
  for (let k = -47; k <= 47; k++) dot(CX + c * 2 * CM, CY + k * CM / 5);
}
for (let r = -4; r <= 4; r++) {
  for (let k = -63; k <= 62; k++) dot(CX + k * CM / 5, CY + r * 2 * CM);
}
guides.innerHTML =
  `<path d="${dots}" fill="#111" shape-rendering="crispEdges"/>` +
  '<path d="M2 114H1188" stroke="#cfcfcf" stroke-width="2" stroke-dasharray="5 4"/>' +
  '<path d="M595.5 -13V912M-18 446.5H1204" stroke="#999" stroke-dasharray="4 3"/>';
```
